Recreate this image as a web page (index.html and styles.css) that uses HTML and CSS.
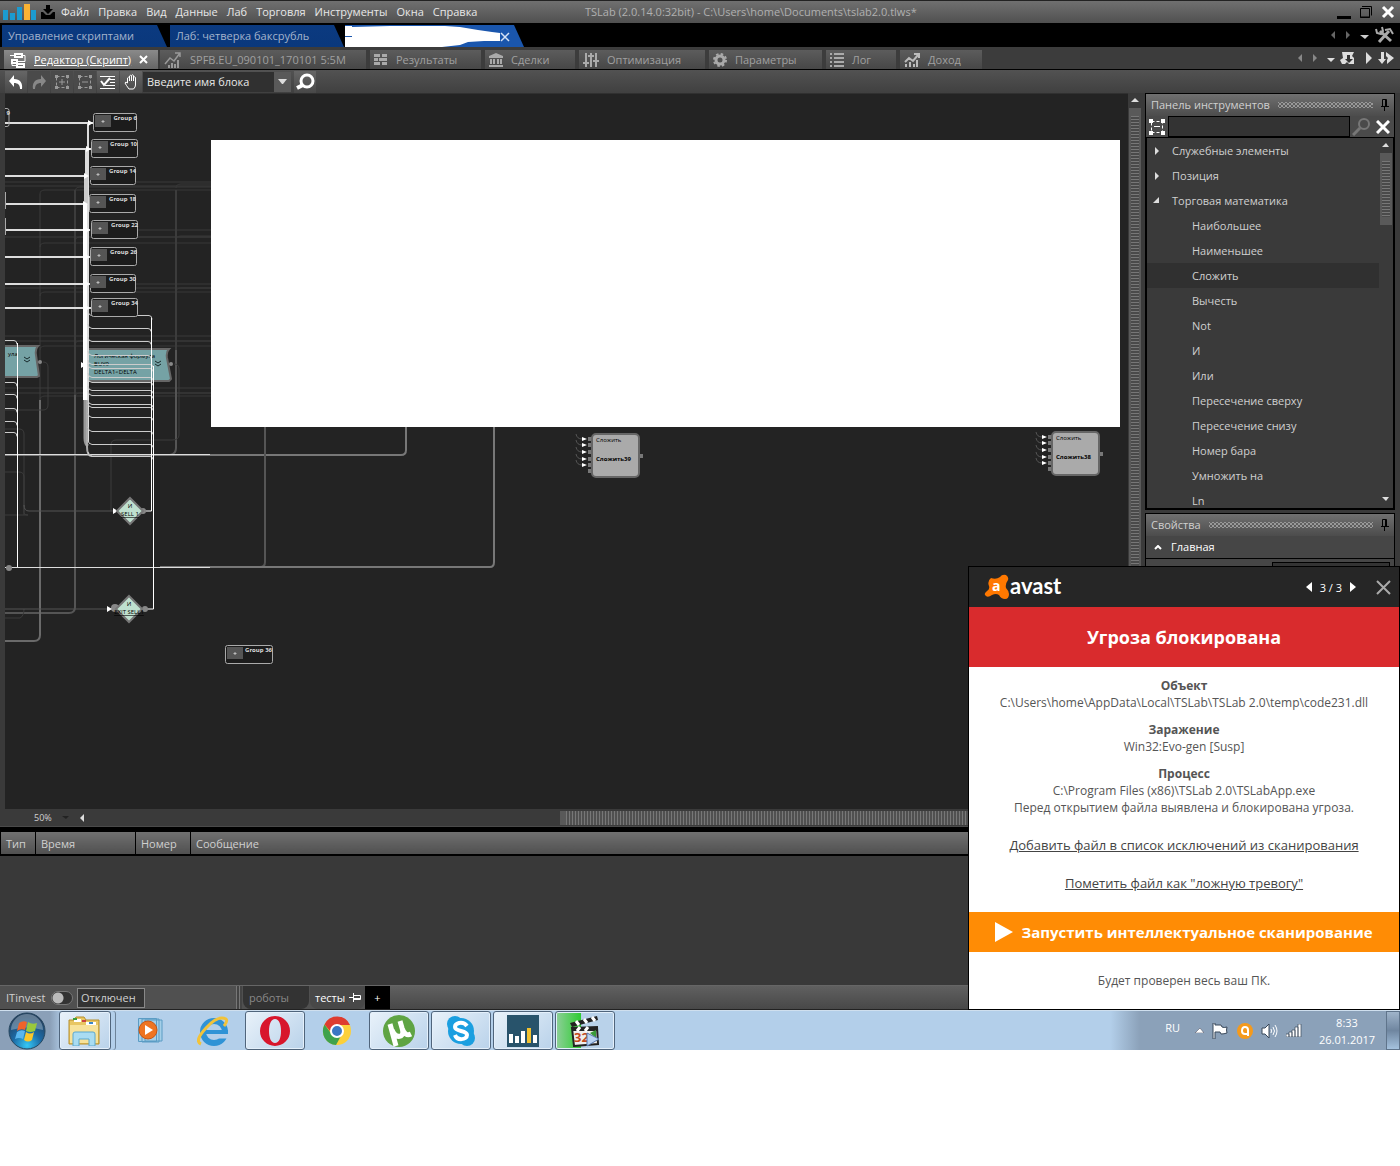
FILE: index.html
```
<!DOCTYPE html>
<html lang="ru">
<head>
    <meta charset="UTF-8">
    <meta name="viewport" content="width=device-width, initial-scale=1.0">
    <title>TSLab (2.0.14.0:32bit)</title>
    <link rel="stylesheet" href="styles.css">
</head>
<body>
<div class="desktop">
    <div class="app">
        <header class="titlebar">
            <svg class="logo" width="34" height="16" viewBox="0 0 34 16"><path fill="#1b9bd0" d="M0 6h5v10H0zM7 9h5v7H7zM14 3h5v13h-5zM28 6h5v10h-5z"/><path fill="#f9b233" d="M21 0h6v16h-6z"/></svg>
            <svg width="14" height="14" viewBox="0 0 14 14"><path d="M5 0h4v4h3L7 9 2 4h3zM0 7h2l3 3h4l3-3h2v7H0z"/></svg>
            <nav class="menu">
                <a href="#">Файл</a><a href="#">Правка</a><a href="#">Вид</a><a href="#">Данные</a><a href="#">Лаб</a><a href="#">Торговля</a><a href="#">Инструменты</a><a href="#">Окна</a><a href="#">Справка</a>
            </nav>
            <div class="window-title">TSLab (2.0.14.0:32bit) - C:\Users\home\Documents\tslab2.0.tlws*</div>
            <div class="window-buttons">
                <button aria-label="Свернуть"><svg width="14" height="14" viewBox="0 0 14 14"><path d="M0 11h14v3H0z"/></svg></button>
                <button aria-label="Развернуть"><svg width="14" height="14" viewBox="0 0 14 14" fill="none" stroke="#000"><path d="M3 1.500h9.500v9"/><path d="M1.500 3.500h9v9h-9zM1 12h10"/></svg></button>
                <button aria-label="Закрыть"><svg width="14" height="14" viewBox="0 0 14 14" stroke="#fff" stroke-width="3"><path d="M2 2l10 10M12 2L2 12"/></svg></button>
            </div>
        </header>

        <div class="doc-tabs">
            <button class="doc-tab">Управление скриптами</button>
            <button class="doc-tab">Лаб: четверка баксрубль</button>
            <button class="doc-tab current" aria-label="Текущая вкладка">
                <svg width="179" height="22" viewBox="0 0 179 22"><path fill="#fff" d="M0 1h7v1l38-1h55l15 1 18 3 14 2 8 1v8h-16l-16 1-8 3-18 2-24 1H0V12h7v-1H0z"/><path stroke="#d5e2f5" stroke-width="1.500" d="M156 8l8 8M164 8l-8 8"/></svg>
            </button>
            <div class="tab-tools">
                <svg width="64" height="18" viewBox="0 0 64 18"><path fill="#666" d="M5 5v8L1 9zM16 5v8l4-4z"/><path fill="#ccc" d="M30 9h9l-4 4z"/><g fill="none" stroke="#aaa" stroke-width="3"><path d="M61 15L50 5M49 16l10-11"/><path stroke-width="2" d="M55 4l5-1 3 5M46 3l1 4 4 1 2-3-1-4"/></g></svg>
            </div>
        </div>

        <div class="view-tabs">
            <button class="view-tab editor current"><svg width="16" height="16" viewBox="0 0 16 16" fill="none" stroke="#fff" stroke-width="2"><path d="M5 2h7v3H5zM2 8h5v3H2zM7 12h7v3H7z"/><path stroke-width="1" d="M0 3.500h5M12 3.500h3v6H7M2 11v2.500h5"/></svg><u>Редактор (Скрипт)</u><svg class="close" width="9" height="9" viewBox="0 0 9 9" stroke="#fff" stroke-width="2"><path d="M1 1l7 7M8 1L1 8"/></svg></button>
            <button class="view-tab chart"><svg width="18" height="16" viewBox="0 0 18 16"><path fill="none" stroke="#999" stroke-width="1.500" d="M1 12l5-6 4 3 6-8M11 1h5v4"/><path fill="#999" d="M4 13h2v3H4zM7 11h2v5H7zM10 12h2v4h-2zM13 8h2v8h-2z"/></svg>SPFB.EU_090101_170101 5:5M</button>
            <button class="view-tab results"><svg width="14" height="14" viewBox="0 0 14 14" fill="#aaa"><path d="M0 1h6v3H0zM8 1h5v3H8zM0 5h4v3H0zM5 5h8v3H5zM0 9h6v3H0zM8 9h5v3H8z"/></svg>Результаты</button>
            <button class="view-tab deals"><svg width="14" height="14" viewBox="0 0 14 14" fill="#aaa"><path d="M7 0l7 3v2H0V3zM1 6h2v5H1zM4 6h2v5H4zM8 6h2v5H8zM11 6h2v5h-2zM0 12h14v2H0z"/></svg>Сделки</button>
            <button class="view-tab optimize"><svg width="16" height="14" viewBox="0 0 16 14" fill="#aaa"><path d="M2 0h2v14H2zM7 0h2v14H7zM12 0h2v14h-2zM0 9h6v2H0zM5 2h6v2H5zM10 7h6v2h-6z"/></svg>Оптимизация</button>
            <button class="view-tab params"><svg width="14" height="14" viewBox="0 0 14 14" fill="none" stroke="#aaa"><circle cx="7" cy="7" r="4" stroke-width="3"/><circle cx="7" cy="7" r="6" stroke-width="2" stroke-dasharray="2.500 2.210"/></svg>Параметры</button>
            <button class="view-tab log"><svg width="14" height="14" viewBox="0 0 14 14" fill="#aaa"><path d="M0 0h2v2H0zM4 0h10v2H4zM0 4h2v2H0zM4 4h10v2H4zM0 8h2v2H0zM4 8h10v2H4zM0 12h2v2H0zM4 12h10v2H4z"/></svg>Лог</button>
            <button class="view-tab income"><svg width="16" height="14" viewBox="0 0 16 14"><path fill="none" stroke="#bbb" stroke-width="2" d="M1 9l4-4 4 3 5-6M10 1h5v4"/><path fill="#bbb" d="M1 11h2v3H1zM5 9h2v5H5zM9 11h2v3H9zM12 7h2v7h-2z"/></svg>Доход</button>
            <div class="tab-tools">
                <svg width="97" height="16" viewBox="0 0 97 16"><path fill="#888" d="M5 4v8L1 8zM16 4v8l4-4z"/><path fill="#ddd" d="M30 8h8l-4 4zM69 2v12l6-6z"/><path fill="#ddd" d="M45 2h12l-2 4 2 2v6h-5l-2-2-2 2h-3l-2-4 3-2z"/><path fill="#333" d="M50 5h3v4h3l-4 4-4-4h2z"/><path fill="#ddd" d="M84 2h3v7h2l-4 5-4-5h3zM89 2l8 6-7 6v-4l1-2-2-2z"/></svg>
            </div>
        </div>

        <div class="toolbar">
            <button class="tool" aria-label="Отменить"><svg width="16" height="16" viewBox="0 0 16 16"><path fill="#fff" d="M6 1v4c6 0 9 4 8 10h-2c0-4-2-6-6-6v4L1 7z"/></svg></button>
            <button class="tool off" aria-label="Повторить"><svg width="16" height="16" viewBox="0 0 16 16"><path fill="#888" d="M10 1v4C4 5 1 9 2 15h2c0-4 2-6 6-6v4l5-6z"/></svg></button>
            <button class="tool off" aria-label="Сгруппировать"><svg width="16" height="16" viewBox="0 0 16 16" fill="none" stroke="#999"><path stroke-dasharray="3 2" d="M2.500 2.500h11v11h-11z"/><path d="M5 8h6M8 5v6"/><path fill="#999" stroke="none" d="M1 1h3v3H1zM12 1h3v3h-3zM1 12h3v3H1zM12 12h3v3h-3z"/></svg></button>
            <button class="tool off" aria-label="Разгруппировать"><svg width="16" height="16" viewBox="0 0 16 16" fill="none" stroke="#999"><path stroke-dasharray="3 2" d="M2.500 2.500h11v11h-11z"/><path d="M5 8h6"/><path fill="#999" stroke="none" d="M1 1h3v3H1zM12 1h3v3h-3zM1 12h3v3H1zM12 12h3v3h-3z"/></svg></button>
            <button class="tool" aria-label="Проверить"><svg width="16" height="16" viewBox="0 0 16 16" stroke="#fff" fill="none"><path d="M0 2.500h15M10 5.500h5M10 8.500h5M5 11.500h10M0 14.500h15"/><path stroke-width="2" d="M1 7l3 4 6-7"/></svg></button>
            <button class="tool" aria-label="Рука"><svg width="16" height="16" viewBox="0 0 16 16" fill="none" stroke="#fff"><path d="M4.500 9V4q1-1.500 2 0V2q1-1.500 2 0V1.500q1-1.500 2 0V3.500q1.500-1.500 2 0V11q0 2-2 4H6Q3 11 2 9q.5-2 2.500 0zM6.500 4v3M8.500 2v5M10.500 3v4"/></svg></button>
            <div class="combo">
                <input type="text" value="Введите имя блока" aria-label="Имя блока">
                <button aria-label="Список блоков"><svg width="9" height="5" viewBox="0 0 9 5"><path fill="#ddd" d="M0 0h9L5 5H4z"/></svg></button>
            </div>
            <button class="tool" aria-label="Найти"><svg width="20" height="18" viewBox="0 0 20 18" fill="none" stroke="#fff"><circle cx="12" cy="8" r="6" stroke-width="3"/><path stroke-width="4" d="M8 12l-6 3"/></svg></button>
        </div>

        <div class="workspace">
            <section class="editor-pane">
                <svg class="canvas" width="1123" height="715" viewBox="5 94 1123 715">
                    <defs>
                        <g id="plus"><rect x="2" y="1" width="16" height="12" fill="#555"/><path stroke="#bbb" d="M8.500 7.500h3M10 6v3"/></g>
                        <g id="ports" fill="#777">
                            <path d="M-4 3h4v4h-4zM-4 9h4v4h-4zM-4 16h4v4h-4zM-4 23h4v4h-4zM-4 29h4v4h-4zM-4 35h4v4h-4zM47 20h4v4h-4z"/>
                            <path fill="#fff" d="M-10 3v4l5-2zM-10 9v4l5-2zM-10 16v4l5-2zM-10 23v4l5-2zM-10 29v4l5-2z"/>
                            <path fill="none" stroke="#555" d="M-16 0q1 5 6 5M-16 6q1 5 6 5M-16 13q1 5 6 5M-16 20q1 5 6 5M-16 26q1 5 6 5"/>
                            <rect width="47" height="43" rx="4" fill="#aaa" stroke="#666" stroke-width="2"/>
                        </g>
                    </defs>
                    <!-- dim background wires -->
                    <g fill="none" stroke="#2e2e2e" stroke-width="2">
                        <path d="M5 182h206M5 186h206M5 230h206M5 237h206M5 284h206M5 288h206M5 336h206M5 341h206M5 388h206M5 393h206"/>
                        <path stroke="#383838" stroke-width="1" d="M40 194q0-4 5-4h166M40 247q0-4 5-4h166M40 296q0-4 5-4h166M40 350q0-4 5-4h166M40 400q0-4 5-4h166M75 192q0-5 5-5h131M75 242q0-5 5-5h131M75 345q0-4 5-4h131M75 397q0-4 5-4h131M176 188q0-4 5-4h30M176 240q0-4 5-4h30M176 292q0-4 5-4h30"/>
                        <path stroke="#3c3c3c" d="M176 190v160M75 190v205"/>
                        <path stroke="#555" d="M176 350v98q0 6-6 7M75 395v212q0 6-6 6H5"/>
                        <path stroke="#6a6a6a" d="M40 400v235q0 6-6 6H5"/>
                        <path stroke="#3c3c3c" stroke-width="1" d="M40 194v206M43 362q5 0 5 5v38q0 5-5 5H5M5 429h14q5 0 5 5v77M5 472h14q5 0 5 5v38M111 511v-66q0-5 5-5h56q7 0 7-5v-66q0-5-5-5M24 511q-1 4 4 4H5M5 618h15q4-2 4-9"/>
                        <path stroke="#555" stroke-width="1" d="M24 505q0 6 5 6h86M5 609h103"/>
                        <path stroke="#777" d="M5 455h396q5 0 5-5v-23"/>
                        <path stroke="#555" d="M265 427v135q0 5-5 5"/>
                        <path stroke="#777" d="M160 567h330q4 0 4-5V427"/>
                    </g>
                    <path fill="none" stroke="#ddd" d="M5 567.500h205M5 454.500h205"/>
                    <!-- formula blocks -->
                    <g fill="#75a2a5" stroke="#666" stroke-width="2">
                        <path d="M0 346h38q-3 3-2 9l3 21-2 1H0zM87 349h82q-3 3-2 9l4 21-2 2H87z"/>
                    </g>
                    <g fill="#888"><circle cx="40" cy="362" r="2"/><circle cx="171" cy="364" r="2"/></g>
                    <g fill="none" stroke="#17282a"><path d="M24 357l3 2 3-2M24 360l3 2 3-2M155 361l3 2 3-2M155 364l3 2 3-2"/></g>
                    <g class="block-text"><text x="8" y="356">ула</text><text x="94" y="358">Логическая формула</text><text x="94" y="366">BUY9</text><text x="94" y="374">DELTA1&lt;DELTA</text></g>
                    <!-- bright wires -->
                    <g fill="none" stroke="#ddd" stroke-width="2">
                        <path d="M5 123h88M5 149h86M5 176h84M5 204h83M5 230h85M5 257h85M5 284h85M5 308h86"/>
                        <path d="M88 124v318M86 150v250"/>
                        <path stroke="#ccc" stroke-width="4" d="M86 176v28"/>
                        <path stroke="#fff" stroke-width="4" d="M85 204v196"/>
                        <path stroke="#999" stroke-width="3" d="M85 400v38q0 6 3 8"/>
                        <path stroke="#aaa" stroke-width="2" d="M87 400v47q0 9 5 9"/>
                    </g>
                    <path fill="#fff" d="M88 120l5 3-5 3zM86 146l5 3-5 3zM84 173l5 3-5 3zM83 201l5 3-5 3zM85 227l5 3-5 3zM85 254l5 3-5 3zM85 281l5 3-5 3zM85 305l5 3-5 3zM81 362l5 3-5 3z"/>
                    <g fill="none" stroke="#ccc">
                        <path d="M88 310q0 5 4 5.500h57q3 0 3 4M88 324q0 4 4 4.500h56q3 0 3 3M88 337q0 4 4 4.500h56q3 0 3 3M88 351q0 4 4 4.500h56q3 0 3 3M88 360q0 4 4 4.500h58q3 0 3 3M88 364q0 4 4 4.500h58q3 0 3 3M88 373q0 4 4 4.500h58q3 0 3 3M88 378q0 4 4 4.500h58q3 0 3 3M88 386q0 4 4 4.500h58q3 0 3 3M88 391q0 4 4 4.500h58q3 0 3 3M88 400q0 4 4 4.500h58q3 0 3 3M88 403q0 4 4 4.500h58q3 0 3 3M88 413q0 4 4 4.500h58q3 0 3 3M88 427q0 4 4 4.500h58q3 0 3 3M88 440q0 4 4 4.500h58q3 0 3 3M88 452q0 4 4 4.500h58q3 0 3 3"/>
                        <path d="M5 340.500h9q3 0 3 4M5 382.500h9q3 0 3 4M5 394.500h9q3 0 3 4M5 408.500h9q3 0 3 4M5 421.500h9q3 0 3 4M5 432.500h9q3 0 3 4"/>
                        <path stroke="#fff" d="M17.500 343v224M151.500 318v193h-6M153.500 366v243h-7"/>
                    </g>
                    <g fill="#888"><circle cx="9" cy="568" r="3"/><circle cx="143" cy="511" r="3"/><circle cx="145" cy="609" r="3"/><circle cx="115" cy="608" r="4"/></g>
                    <path fill="#fff" d="M113 508l5 3-5 3zM107 606l5 3-5 3z"/>
                    <g fill="#bfe0cf" stroke="#777" stroke-width="2"><path d="M130 498l13 13-13 13-13-13zM129 596l13 13-13 13-13-13z"/></g>
                    <g class="block-text" text-anchor="middle"><text x="130" y="508">И</text><text x="130" y="516" text-decoration="underline">SELL 1</text><text x="129" y="606">И</text><text x="129" y="614" text-decoration="underline">EXIT SELL1</text></g>
                    <!-- groups -->
                    <g fill="#1c1c1c" stroke="#aaa">
                        <rect x="93.500" y="113.500" width="43" height="18" rx="2"/><rect x="91.500" y="139.500" width="46" height="18" rx="2"/><rect x="90.500" y="166.500" width="45" height="18" rx="2"/><rect x="89.500" y="194.500" width="46" height="18" rx="2"/><rect x="91.500" y="220.500" width="46" height="18" rx="2"/><rect x="90.500" y="247.500" width="46" height="18" rx="2"/><rect x="90.500" y="274.500" width="45" height="18" rx="2"/><rect x="91.500" y="298.500" width="46" height="18" rx="2"/><rect x="225.500" y="645.500" width="47" height="18" rx="2"/>
                        <path fill="none" d="M5 108.500h2q2 0 2 2v14q0 2-2 2H5M5.500 192v17M5.500 218v17"/>
                    </g>
                    <use href="#plus" x="93" y="114"/><use href="#plus" x="90" y="140"/><use href="#plus" x="88" y="167"/><use href="#plus" x="88" y="195"/><use href="#plus" x="90" y="221"/><use href="#plus" x="89" y="248"/><use href="#plus" x="88" y="275"/><use href="#plus" x="90" y="299"/><use href="#plus" x="225" y="646"/>
                    <g class="group-text" text-anchor="end">
                        <text x="137" y="120">Group 6</text><text x="137" y="146">Group 10</text><text x="136" y="173">Group 14</text><text x="136" y="201">Group 18</text><text x="138" y="227">Group 22</text><text x="137" y="254">Group 26</text><text x="136" y="281">Group 30</text><text x="138" y="305">Group 34</text><text x="272" y="652">Group 36</text><text x="10" y="115">9</text>
                    </g>
                    <use href="#ports" x="592" y="434"/><use href="#ports" x="1052" y="432"/>
                    <g class="block-text"><text x="596" y="442">Сложить</text><text x="596" y="461" font-weight="700">Сложить39</text><text x="1056" y="440">Сложить</text><text x="1056" y="459" font-weight="700">Сложить38</text></g>
                    <rect x="211" y="140" width="909" height="287" fill="#fff"/>
                </svg>
                <div class="zoom-bar">
                    <span class="zoom">50%</span>
                    <svg width="24" height="8" viewBox="0 0 24 8"><path fill="#222" d="M0 2h7L4 5z"/><path fill="#ddd" d="M22 0v8l-4-4z"/></svg>
                    <div class="thumb-x"></div>
                </div>
            </section>

            <div class="scroll-y">
                <svg width="8" height="15" viewBox="0 0 8 15"><path fill="#ddd" d="M0 9h8L4 5z"/></svg>
                <div class="thumb-y"></div>
            </div>

            <aside class="side">
                <section class="panel">
                    <h2 class="panel-head">Панель инструментов<i class="dots"></i><svg width="8" height="12" viewBox="0 0 8 12"><path fill="none" stroke="#000" d="M1.500 7V.5h4V7M4.500 0v7M0 7.500h8M3.500 8v4"/></svg></h2>
                    <div class="search">
                        <button aria-label="Свернуть группы"><svg width="18" height="18" viewBox="0 0 18 18" fill="#fff"><path fill="none" stroke="#fff" stroke-dasharray="3 2" d="M3.500 3.500h11v11h-11z"/><path d="M1 1h4v4H1zM13 1h4v4h-4zM1 13h4v4H1zM13 13h4v4h-4zM6 8h6v1H6z"/></svg></button>
                        <input type="text" aria-label="Поиск">
                        <button aria-label="Искать"><svg width="18" height="18" viewBox="0 0 18 18" fill="none" stroke="#777" stroke-width="2"><circle cx="12" cy="6" r="5"/><path stroke-width="3" d="M8 10l-7 7"/></svg></button>
                        <button aria-label="Очистить"><svg width="14" height="14" viewBox="0 0 14 14" stroke="#fff" stroke-width="3"><path d="M1 1l12 12M13 1L1 13"/></svg></button>
                    </div>
                    <div class="tree-wrap">
                        <ul class="tree">
                            <li class="folder"><svg width="8" height="8" viewBox="0 0 8 8"><path fill="#ddd" d="M2 0v8l4-4z"/></svg>Служебные элементы</li>
                            <li class="folder"><svg width="8" height="8" viewBox="0 0 8 8"><path fill="#ddd" d="M2 0v8l4-4z"/></svg>Позиция</li>
                            <li class="folder"><svg width="8" height="8" viewBox="0 0 8 8"><path fill="#ddd" d="M6 0v6H0z"/></svg>Торговая математика</li>
                            <li>Наибольшее</li>
                            <li>Наименьшее</li>
                            <li class="hovered">Сложить</li>
                            <li>Вычесть</li>
                            <li>Not</li>
                            <li>И</li>
                            <li>Или</li>
                            <li>Пересечение сверху</li>
                            <li>Пересечение снизу</li>
                            <li>Номер бара</li>
                            <li>Умножить на</li>
                            <li>Ln</li>
                        </ul>
                        <div class="tree-scroll">
                            <svg width="8" height="15" viewBox="0 0 8 15"><path fill="#ddd" d="M0 9h7L4 5z"/></svg>
                            <div class="thumb-y short"></div>
                            <svg width="8" height="15" viewBox="0 0 8 15"><path fill="#ddd" d="M0 4h7L4 8z"/></svg>
                        </div>
                    </div>
                </section>
                <section class="panel grow">
                    <h2 class="panel-head">Свойства<i class="dots"></i><svg width="8" height="12" viewBox="0 0 8 12"><path fill="none" stroke="#000" d="M1.500 7V.5h4V7M4.500 0v7M0 7.500h8M3.500 8v4"/></svg></h2>
                    <h3 class="prop-head"><svg width="8" height="5" viewBox="0 0 8 5"><path fill="none" stroke="#fff" stroke-width="2" d="M1 4l3-3 3 3"/></svg>Главная</h3>
                    <div class="prop-row"><span></span><input type="text" aria-label="Значение"></div>
                </section>
            </aside>
        </div>

        <div class="log-pane">
            <table class="log-table">
                <thead><tr><th class="type">Тип</th><th class="time">Время</th><th class="num">Номер</th><th>Сообщение</th></tr></thead>
            </table>
        </div>

        <footer class="statusbar">
            <label class="provider">ITinvest<input type="checkbox"></label>
            <output class="state">Отключен</output>
            <i class="grip"></i>
            <button class="sheet robots">роботы</button>
            <button class="sheet tests">тесты<svg width="12" height="9" viewBox="0 0 12 9"><path fill="none" stroke="#fff" d="M0 4.500h4M4.500 0v9M5 2.500h6.500v4H5M5 5.500h6"/></svg></button>
            <button class="sheet add" aria-label="Добавить">+</button>
            <div class="status-rest"></div>
        </footer>
    </div>

    <div class="taskbar">
        <button class="start" aria-label="Пуск">
            <svg width="38" height="38" viewBox="0 0 38 38"><defs><radialGradient id="orb" cx=".5" cy=".9" r=".8"><stop offset="0" stop-color="#35c8f5"/><stop offset=".5" stop-color="#1c6aa5"/><stop offset="1" stop-color="#24405f"/></radialGradient></defs><circle cx="19" cy="19" r="18" fill="url(#orb)" stroke="#27475f"/><path fill="#9fb8ca" opacity=".5" d="M3 18a16 16 0 0 1 32 0q-16-5-32 0z"/><path fill="#f0642a" d="M11 11q4-3 8-1l-2 8q-4-2-8 1z"/><path fill="#9ac93c" d="M20 10q4 3 9 1l-2 8q-5 2-9 0z"/><path fill="#5ab6ee" d="M9 20q4-3 8-1l-2 8q-4-2-8 0z"/><path fill="#fcc729" d="M18 20q4 3 8 0l-2 8q-4 3-8 0z"/></svg>
        </button>
        <button class="task open stacked" aria-label="Проводник">
            <svg width="34" height="30" viewBox="0 0 34 30"><path fill="#e8c663" stroke="#b58e2d" d="M1 4h5l2-3h8l2 3h13v24H1z"/><path fill="#fff" d="M6 3h7v3H6zM18 6h10v3H18z"/><path fill="#3b9e3b" d="M5 2h4v2H5z"/><path fill="#c44" d="M14 4h4v2h-4z"/><path fill="#3a86c8" d="M21 6h4v2h-4z"/><path fill="#f7e29a" d="M2 9h28v18H2z"/><path fill="#a9dcf2" stroke="#5ba8cf" d="M5 30V18q0-2 2-2h18q2 0 2 2v12h-6v-7H11v7z"/></svg>
        </button>
        <button class="task" aria-label="Проигрыватель">
            <svg width="28" height="28" viewBox="0 0 28 28"><path fill="#a5cfe8" stroke="#5b9cc4" d="M8 3h17v21H8zM5 2h17v23H5zM1.500 1.500h18v23h-18z"/><circle cx="11" cy="13" r="9" fill="#ee7421" stroke="#c95510"/><path fill="#fff" d="M8 8v10l8-5z"/></svg>
        </button>
        <button class="task" aria-label="Internet Explorer">
            <svg width="32" height="32" viewBox="0 0 32 32"><circle cx="17" cy="17" r="11" fill="none" stroke="#2f93d6" stroke-width="6"/><path stroke="#b4cfea" stroke-width="5" d="M19 21h13"/><path stroke="#2f93d6" stroke-width="4" d="M9 17h22"/><path fill="none" stroke="#f2c33a" stroke-width="3" d="M4 29Q-3 26 9 13T29 4q2 2-2 7"/></svg>
        </button>
        <button class="task open" aria-label="Opera">
            <svg width="32" height="32" viewBox="0 0 32 32"><path fill="#d8162c" fill-rule="evenodd" d="M16 1a15 15 0 1 0 0 30a15 15 0 1 0 0-30zM16 4c4 0 6 5 6 12s-2 12-6 12-6-5-6-12 2-12 6-12z"/></svg>
        </button>
        <button class="task" aria-label="Chrome">
            <svg width="30" height="30" viewBox="0 0 30 30"><circle cx="15" cy="15" r="14" fill="#fcd03a"/><path fill="#de3c30" d="M2.500 8.500A14 14 0 0 1 28 9H15l-7 6z"/><path fill="#3fa24c" d="M2.500 8.500A14 14 0 0 0 14 29l6-11-9 2z"/><circle cx="15" cy="15" r="6" fill="#3b77c4" stroke="#fff" stroke-width="2"/></svg>
        </button>
        <button class="task open" aria-label="uTorrent">
            <svg width="32" height="32" viewBox="0 0 32 32"><circle cx="16" cy="16" r="16" fill="#5fa443"/><path fill="none" stroke="#fff" stroke-width="5" d="M7 9l6 22M9 15q3 8 9 6 3-2 1-8l-2-7M19 13q3 9 9 6"/></svg>
        </button>
        <button class="task open" aria-label="Skype">
            <svg width="30" height="30" viewBox="0 0 30 30"><circle cx="15" cy="15" r="13" fill="#1b9fe0"/><circle cx="9" cy="8" r="8" fill="#1b9fe0"/><circle cx="21" cy="22" r="8" fill="#1b9fe0"/><path fill="none" stroke="#fff" stroke-width="4" d="M21 10q-3-4-8-3-4 1-4 4c0 5 12 3 12 8 0 5-10 6-12 0"/></svg>
        </button>
        <button class="task open" aria-label="TSLab">
            <svg width="32" height="32" viewBox="0 0 32 32"><path fill="#28536b" d="M0 0h32v32H0z"/><path fill="#fff" d="M2 19h4v9H2zM8 21h4v7H8zM14 16h4v12h-4zM26 20h4v8h-4z"/><path fill="#f2c230" d="M20 13h4v15h-4z"/></svg>
        </button>
        <button class="task open progress" aria-label="Media Player Classic">
            <svg width="32" height="32" viewBox="0 0 32 32"><path fill="#eee" stroke="#222" stroke-width="2" d="M3 13l25-1 1 17-24 2z"/><path fill="#222" d="M1 8l27-7 1 4L3 12zM3 12h25v4H4z"/><path stroke="#fff" stroke-width="3" d="M7 6l3 4M15 4l3 4M23 2l3 4M8 16l3-4M16 16l3-4"/><text class="clap" x="5" y="27">32</text><path fill="#3a9a3a" d="M27 15v8l-6-5z"/><path fill="#b9d3f3" stroke="#5477ad" d="M18 18v13l12-7z"/></svg>
        </button>
        <div class="tray">
            <span class="lang">RU</span>
            <svg width="9" height="5" viewBox="0 0 9 5"><path fill="#fff" stroke="#445" stroke-width=".5" d="M0 5h9L5 0z"/></svg>
            <svg width="17" height="16" viewBox="0 0 17 16"><path fill="#fff" stroke="#39485a" d="M1 0v16h2V9h5l1 2q3 0 6-1-1-3 0-6-3 1-5 0L9 2H3V0z"/></svg>
            <svg width="16" height="16" viewBox="0 0 16 16"><circle cx="8" cy="8" r="8" fill="#f59a1c"/><path fill="none" stroke="#fff" stroke-width="2" d="M11 13V7q0-3-3-3T5 8q0 3 3 3h3"/></svg>
            <svg width="17" height="14" viewBox="0 0 17 14"><path fill="#fff" stroke="#39485a" d="M1 4h3l4-4v14l-4-4H1z"/><path fill="none" stroke="#fff" d="M10 5q1 2 0 4M12 3q3 4 0 8M14 1q4 6 0 12"/></svg>
            <svg width="16" height="13" viewBox="0 0 16 13"><path fill="#fff" stroke="#39485a" stroke-width=".7" d="M0 10h3v3H0zM3 8h3v5H3zM6 6h3v7H6zM9 3h3v10H9zM12 0h3v13h-3z"/></svg>
            <time class="clock">8:33<br>26.01.2017</time>
            <button class="show-desktop" aria-label="Показать рабочий стол"></button>
        </div>
    </div>

    <section class="avast" role="alertdialog" aria-labelledby="threat">
        <header class="avast-head">
            <svg width="26" height="26" viewBox="0 0 26 26"><path fill="#ff7800" d="M7 4q5 2 9-1 2-3 6-2 3 2 2 5-3 4-2 8 3 3 3 6 0 5-4 5-4 0-6-4-3-2-7 0-4 3-6 1-3-2 1-5 3-2 2-5-2-5 2-8z"/><text class="avast-letter" x="8" y="17">a</text></svg>
            <span class="brand">avast</span>
            <button aria-label="Назад"><svg width="6" height="10" viewBox="0 0 6 10"><path fill="#fff" d="M6 0v10L0 5z"/></svg></button>
            <span class="count">3 / 3</span>
            <button aria-label="Вперёд"><svg width="6" height="10" viewBox="0 0 6 10"><path fill="#fff" d="M0 0v10l6-5z"/></svg></button>
            <button class="avast-close" aria-label="Закрыть"><svg width="15" height="15" viewBox="0 0 15 15" stroke="#aaa" stroke-width="2"><path d="M1 1l13 13M14 1L1 14"/></svg></button>
        </header>
        <h1 id="threat">Угроза блокирована</h1>
        <div class="avast-body">
            <p><b>Объект</b><br>C:\Users\home\AppData\Local\TSLab\TSLab 2.0\temp\code231.dll</p>
            <p><b>Заражение</b><br>Win32:Evo-gen [Susp]</p>
            <p><b>Процесс</b><br>C:\Program Files (x86)\TSLab 2.0\TSLabApp.exe<br>Перед открытием файла выявлена и блокирована угроза.</p>
            <a href="#">Добавить файл в список исключений из сканирования</a>
            <a href="#">Пометить файл как "ложную тревогу"</a>
        </div>
        <button class="scan"><svg width="18" height="20" viewBox="0 0 18 20"><path fill="#fff" d="M0 0v20l18-10z"/></svg>Запустить интеллектуальное сканирование</button>
        <p class="avast-note">Будет проверен весь ваш ПК.</p>
    </section>
</div>
</body>
</html>
```
FILE: styles.css
```
* {
    margin: 0;
    padding: 0;
    box-sizing: border-box;
}

body {
    font-family: "Open Sans", "Segoe UI", sans-serif;
    font-size: 11px;
    line-height: 16px;
    color: #d0d0d0;
    background: #fff;
}

button {
    font: inherit;
    color: inherit;
    background: none;
    border: none;
}

input {
    font: inherit;
    color: inherit;
    min-width: 0;
}

svg {
    display: block;
    flex: none;
}

.desktop {
    position: relative;
}

.app {
    background: #3a3a3a;
}

/* title bar */
.titlebar {
    display: flex;
    align-items: center;
    height: 23px;
    padding-left: 3px;
    border-top: 1px solid #222;
    background: linear-gradient(#707070, #505050);
    gap: 4px;
    white-space: nowrap;
}

.menu {
    display: flex;
    gap: 9px;
    width: 522px;
    padding-left: 2px;
}

.menu a {
    color: #e8e8e8;
    text-decoration: none;
}

.window-title {
    flex: 1;
    color: #b0b0b0;
}

.window-buttons {
    display: flex;
    gap: 8px;
    padding-right: 5px;
}

/* document tabs */
.doc-tabs {
    display: flex;
    align-items: flex-end;
    height: 24px;
    padding-left: 2px;
    gap: 3px;
    background: #000;
}

.doc-tab {
    width: 174px;
    height: 22px;
    padding-left: 6px;
    text-align: left;
    color: #a4b4cc;
    background: linear-gradient(#0b3a80, #0a387c);
    clip-path: polygon(0 0, calc(100% - 10px) 0, 100% 100%, 0 100%);
    white-space: nowrap;
}

.doc-tab:first-child {
    width: 165px;
}

.doc-tab.current {
    width: 179px;
    padding: 0;
    margin-left: -2px;
    background: #1a56ad;
}

.tab-tools {
    margin-left: auto;
    align-self: center;
    padding-right: 6px;
}

/* view tabs */
.view-tabs {
    display: flex;
    align-items: flex-end;
    height: 23px;
    padding-left: 4px;
    gap: 4px;
    background: #3c3c3c;
    border-bottom: 1px solid #000;
}

.view-tab {
    display: flex;
    align-items: center;
    gap: 8px;
    height: 19px;
    padding-left: 4px;
    color: #a0a0a0;
    background: linear-gradient(#5c5c5c, #474747);
    white-space: nowrap;
}

.view-tab.current {
    color: #fff;
    background: linear-gradient(#8a8a8a, #666);
}

.editor { width: 154px; margin-right: -2px; padding-left: 6px; }
.chart { width: 206px; }
.results { width: 111px; }
.deals { width: 90px; }
.optimize { width: 126px; }
.params { width: 113px; }
.log { width: 70px; }
.income { width: 82px; }

/* toolbar */
.toolbar {
    display: flex;
    align-items: center;
    gap: 1px;
    height: 23px;
    padding-left: 5px;
    background: linear-gradient(#525252, #404040);
}

.tool {
    display: grid;
    place-items: center;
    width: 22px;
    height: 22px;
    background: linear-gradient(#666, #484848);
}

.tool.off {
    background: #4a4a4a;
}

.combo {
    display: flex;
    width: 148px;
    height: 20px;
    margin-right: 2px;
}

.combo input {
    flex: 1;
    padding-left: 4px;
    color: #e8e8e8;
    background: #303030;
    border: none;
}

.combo button {
    display: grid;
    place-items: center;
    width: 17px;
    background: #595959;
}

/* workspace */
.workspace {
    display: flex;
    padding: 0 5px;
    background: #3a3a3a;
    border-bottom: 1px solid #4a4a4a;
}

.editor-pane {
    flex: 1;
    min-width: 0;
    overflow: hidden;
    background: #232323;
    border-top: 1px solid #303030;
}

.block-text {
    font-size: 6px;
    fill: #000;
}

.group-text {
    font-size: 6px;
    font-weight: 700;
    fill: #ddd;
}

.zoom-bar {
    display: flex;
    align-items: center;
    height: 17px;
    padding-left: 29px;
    background: #3a3a3a;
}

.zoom {
    width: 28px;
    font-size: 9px;
}

.thumb-x {
    flex: 1;
    height: 14px;
    margin-left: 474px;
    background: repeating-linear-gradient(90deg, #777 0 1px, #505050 1px 3px);
    border-left: 6px solid #595959;
}

.scroll-y {
    display: flex;
    flex-direction: column;
    align-items: center;
    width: 14px;
}

.thumb-y {
    flex: 1;
    width: 12px;
    background: repeating-linear-gradient(#777 0 1px, #4a4a4a 1px 3px);
    border: solid #595959;
    border-width: 8px 2px;
}

.thumb-y.short {
    flex: none;
    height: 72px;
    margin-bottom: auto;
}

/* side panels */
.side {
    display: flex;
    flex-direction: column;
    gap: 3px;
    width: 250px;
    margin-left: 3px;
}

.panel {
    border: 1px solid #000;
}

.panel.grow {
    flex: 1;
}

.panel-head {
    display: flex;
    align-items: center;
    gap: 8px;
    height: 22px;
    padding: 0 5px;
    font-size: 11px;
    font-weight: 400;
    background: linear-gradient(#707070, #4c4c4c);
    white-space: nowrap;
}

.dots {
    flex: 1;
    height: 6px;
    background:
        radial-gradient(#999 1px, transparent 1px) 0 0 / 4px 4px,
        radial-gradient(#999 1px, transparent 1px) 2px 2px / 4px 4px;
}

.search {
    display: flex;
    height: 21px;
    background: #4a4a4a;
}

.search button {
    display: grid;
    place-items: center;
    width: 22px;
}

.search input {
    flex: 1;
    background: #333;
    border: 1px solid #000;
}

.tree-wrap {
    display: flex;
    height: 372px;
    border: 1px solid #000;
    overflow: hidden;
}

.tree {
    flex: 1;
    list-style: none;
}

.tree li {
    height: 25px;
    padding-left: 45px;
    line-height: 25px;
}

.tree .folder {
    display: flex;
    align-items: center;
    gap: 11px;
    padding-left: 6px;
}

.tree .hovered {
    background: #303030;
}

.tree-scroll {
    display: flex;
    flex-direction: column;
    align-items: center;
    width: 14px;
}

.prop-head {
    display: flex;
    align-items: center;
    gap: 9px;
    height: 23px;
    padding-left: 8px;
    font-size: 11px;
    font-weight: 400;
    color: #fff;
    background: #464646;
    border-bottom: 1px solid #000;
}

.prop-row {
    display: flex;
    padding: 3px 4px 3px 0;
    background: #464646;
}

.prop-row span {
    flex: 1;
}

.prop-row input {
    width: 118px;
    background: #333;
    border: 1px solid #000;
}

/* log */
.log-pane {
    min-height: 158px;
    border-top: 5px solid #000;
    background: #393939;
}

.log-table {
    width: 100%;
    table-layout: fixed;
    border-collapse: collapse;
    border-bottom: 2px solid #000;
}

.log-table th {
    height: 23px;
    padding: 1px 0 0 5px;
    font-weight: 400;
    text-align: left;
    background: linear-gradient(#707070, #505050);
    border-left: 1px solid #000;
}

.log-table .type { width: 35px; }
.log-table .time { width: 100px; }
.log-table .num { width: 55px; }

/* status bar */
.statusbar {
    display: flex;
    align-items: stretch;
    height: 25px;
    border-top: 1px solid #666;
    border-bottom: 1px solid #222;
    background: #505050;
}

.provider {
    display: flex;
    align-items: center;
    gap: 5px;
    width: 77px;
    padding-left: 6px;
}

.provider input {
    appearance: none;
    width: 22px;
    height: 14px;
    border: 1px solid #777;
    border-radius: 7px;
    background: radial-gradient(circle at 6px 6px, #bbb 5px, #333 6px);
}

.state {
    align-self: center;
    width: 68px;
    padding: 1px 3px;
    background: #333;
    border: 1px solid #888;
}

.grip {
    width: 6px;
    margin: 0 1px 0 91px;
    background: repeating-linear-gradient(90deg, #777 0 1px, #444 1px 3px);
}

.sheet {
    border-radius: 0 0 8px 8px;
    background: #333;
    color: #888;
}

.sheet.robots {
    width: 66px;
    padding-right: 14px;
}

.sheet.tests {
    display: flex;
    align-items: center;
    gap: 4px;
    width: 55px;
    margin-left: 1px;
    padding-left: 5px;
    color: #fff;
    background: #484848;
}

.sheet.add {
    width: 25px;
    color: #fff;
    background: #000;
    border-radius: 0;
}

.status-rest {
    flex: 1;
    background: linear-gradient(#606060, #484848);
}

/* taskbar */
.taskbar {
    display: flex;
    gap: 2px;
    height: 40px;
    border-top: 1px solid #cfdfee;
    background: linear-gradient(90deg, #8ba0b8 0 50px, #b3cfea 64px calc(100% - 290px), #8ba1b9 calc(100% - 260px));
}

.start {
    width: 57px;
    padding-left: 8px;
}

.task {
    display: grid;
    place-items: center;
    width: 60px;
}

.task.open {
    border: 1px solid #50657c;
    border-radius: 3px;
    background: linear-gradient(135deg, #e9f2fa, #b9d2ea);
    box-shadow: inset 0 0 0 1px #e4f0fb;
}

.task.stacked {
    width: 52px;
    margin-right: 8px;
    box-shadow: inset 0 0 0 1px #e4f0fb, 4px 0 0 #b3cfea, 5px 0 0 #6d8399;
}

.task.progress {
    background: linear-gradient(90deg, #8fcf9a, #2ecc32 43%, #b9d2ea 44%);
}

.clap {
    font-size: 13px;
    font-weight: 700;
    fill: #c2491d;
}

.tray {
    display: flex;
    align-items: center;
    gap: 8px;
    margin-left: auto;
    color: #fff;
}

.lang {
    margin-right: 7px;
    align-self: flex-start;
    padding-top: 9px;
}

.clock {
    width: 62px;
    margin-left: 6px;
    text-align: center;
    line-height: 17px;
}

.show-desktop {
    width: 14px;
    height: 39px;
    border: 1px solid #5f748b;
    background: linear-gradient(#9fb4ca, #6f86a0 50%, #a5c2de);
}

/* antivirus notification */
.avast {
    position: absolute;
    right: 0;
    bottom: 40px;
    width: 432px;
    border: 1px solid #000;
    background: #fff;
    color: #555;
    font-size: 12px;
    line-height: 17px;
    text-align: center;
}

.avast-head {
    display: flex;
    align-items: center;
    height: 40px;
    padding: 0 8px 0 15px;
    color: #fff;
    background: #262626;
}

.avast-letter {
    font-size: 14px;
    font-weight: 700;
    fill: #fff;
}

.brand {
    margin-right: auto;
    padding-bottom: 4px;
    font-family: "Lato", sans-serif;
    font-size: 22px;
    font-weight: 700;
}

.count {
    padding: 0 8px;
    font-size: 11px;
}

.avast-close {
    margin-left: 20px;
}

.avast h1 {
    font-size: 18px;
    line-height: 60px;
    color: #fff;
    background: #d92b2d;
}

.avast-body {
    padding: 10px 0 20px;
}

.avast-body p {
    margin-bottom: 10px;
}

.avast-body a {
    display: block;
    margin-top: 21px;
    color: #444;
    font-size: 13px;
}

.scan {
    display: flex;
    align-items: center;
    justify-content: center;
    gap: 8px;
    width: 100%;
    height: 40px;
    color: #fff;
    background: #ff8c05;
    font-size: 15px;
    font-weight: 700;
}

.avast-note {
    padding: 20px 0;
}
```
